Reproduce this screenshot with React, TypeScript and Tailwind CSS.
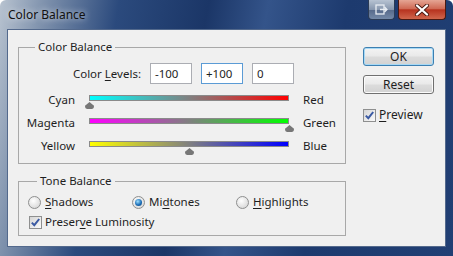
import React from "react";

const sliders = [
  { left: "Cyan", right: "Red", value: -100, grad: "bg-[linear-gradient(to_right,#00ffff,#808080,#ff0000)]" },
  { left: "Magenta", right: "Green", value: 100, grad: "bg-[linear-gradient(to_right,#ff00ff,#808080,#00ff00)]" },
  { left: "Yellow", right: "Blue", value: 0, grad: "bg-[linear-gradient(to_right,#ffff00,#808080,#0000ff)]" },
];

function U({ children }: { children: React.ReactNode }) {
  return <span className="underline underline-offset-[2px] decoration-[1px]">{children}</span>;
}

function Check() {
  return (
    <span className="w-[13px] h-[13px] shrink-0 border border-[#8e8f8f] bg-[linear-gradient(135deg,#d5d5d5,#fbfbfb)] flex items-center justify-center">
      <svg width="11" height="11" viewBox="0 0 11 11">
        <path d="M1.8 5.6 L4.3 8.2 L9.2 2" stroke="#3b5aa3" strokeWidth="2" fill="none" />
      </svg>
    </span>
  );
}

function Radio({ on }: { on?: boolean }) {
  return (
    <span className="w-[13px] h-[13px] shrink-0 rounded-full border border-[#8e8f8f] bg-[radial-gradient(circle_at_40%_35%,#ffffff,#cfcfcf)] flex items-center justify-center">
      {on && (
        <span className="w-[7px] h-[7px] rounded-full bg-[radial-gradient(circle_at_40%_35%,#9fe0ff,#1d6fb8_55%,#0d3f75)]" />
      )}
    </span>
  );
}

function Thumb({ value }: { value: number }) {
  const center = ((value + 100) / 200) * 200;
  return (
    <svg
      className="absolute top-[7px]"
      style={{ left: center - 4.5 }}
      width="9"
      height="7"
      viewBox="0 0 9 7"
    >
      <path d="M4.5 0 L9 3.8 Q9 7 6.5 7 H2.5 Q0 7 0 3.8 Z" fill="#777777" />
    </svg>
  );
}

export default function App() {
  return (
    <div className="w-[453px] h-[256px] flex flex-col rounded-t-[6px] overflow-hidden text-[11.5px] text-[#1e1e1e] font-['Noto_Sans',sans-serif] bg-[linear-gradient(100deg,#b8c3d0_0%,#7f92ad_9%,#2b4a7d_24%,#1b3667_42%,#34548a_54%,#1d3a6e_70%,#213f74_100%)]">
      {/* title bar */}
      <div className="h-[29px] flex items-start shrink-0">
        <div className="pl-[8px] pt-[7px] leading-[16px] text-[12px] text-[#111] [text-shadow:0_0_6px_rgba(255,255,255,0.9)]">
          Color Balance
        </div>
        <div className="ml-auto flex gap-[3px] mr-[7px]">
          <div className="w-[27px] h-[20px] rounded-b-[4px] border border-t-0 border-[#2b3b55] bg-[linear-gradient(to_bottom,#b7c3d2,#8797ae_50%,#56698a_52%,#7489a8)] flex items-center justify-center">
            <svg width="13" height="11" viewBox="0 0 13 11">
              <rect x="1" y="1" width="8" height="9" fill="none" stroke="#e8edf3" strokeWidth="1.3" />
              <path d="M5 5.5 H12 M9.5 3 L12 5.5 L9.5 8" stroke="#e8edf3" strokeWidth="1.3" fill="none" />
            </svg>
          </div>
          <div className="w-[48px] h-[20px] rounded-b-[4px] border border-t-0 border-[#4b1a12] bg-[linear-gradient(to_bottom,#e5a594,#cf6a55_45%,#b7331f_52%,#d0664c)] flex items-center justify-center">
            <svg width="16" height="12" viewBox="0 0 16 12">
              <path d="M3 1.5 L13 10.5 M13 1.5 L3 10.5" stroke="#4a1a12" strokeWidth="4" strokeLinecap="round" />
              <path d="M3 1.5 L13 10.5 M13 1.5 L3 10.5" stroke="#ffffff" strokeWidth="2.3" strokeLinecap="round" />
            </svg>
          </div>
        </div>
      </div>

      {/* client */}
      <div className="mx-[7px] h-[218px] shrink-0 border border-[#53698c] bg-[#f0f0f0] flex">
        <div className="pl-[10px] flex flex-col">
          <fieldset className="mt-[9px] w-[328px] border border-[#a8a8a8] pb-[5px]">
            <legend className="ml-[16px] px-[3px] leading-[16px]">Color Balance</legend>
            <div className="flex items-center mt-[8px]">
              <div className="w-[122px] text-right">
                Color <U>L</U>evels:
              </div>
              <div className="ml-[9px] flex gap-[9px]">
                <div className="w-[42px] h-[21px] border border-[#abadb3] bg-white pl-[4px] leading-[19px]">-100</div>
                <div className="w-[42px] h-[21px] border border-[#5b9bd5] bg-white pl-[4px] leading-[19px]">+100</div>
                <div className="w-[42px] h-[21px] border border-[#abadb3] bg-white pl-[4px] leading-[19px]">0</div>
              </div>
            </div>
            <div className="mt-[5px] flex flex-col">
              {sliders.map((s) => (
                <div key={s.left} className="h-[23px] flex items-start">
                  <div className="w-[56px] text-right mt-[3px] leading-[16px]">{s.left}</div>
                  <div className="relative ml-[14px] w-[200px] mt-[6px]">
                    <div className={`h-[6px] border border-[#8a8a8a] ${s.grad}`} />
                    <Thumb value={s.value} />
                  </div>
                  <div className="ml-[14px] mt-[3px] leading-[16px]">{s.right}</div>
                </div>
              ))}
            </div>
          </fieldset>

          <fieldset className="mt-[9px] w-[328px] border border-[#a8a8a8] pb-[5px]">
            <legend className="ml-[18px] px-[3px] leading-[16px]">Tone Balance</legend>
            <div className="mt-[5px] pl-[9px] flex h-[16px] items-center">
              <div className="w-[104px] flex items-center gap-[4px]">
                <Radio />
                <span><U>S</U>hadows</span>
              </div>
              <div className="w-[104px] flex items-center gap-[4px]">
                <Radio on />
                <span>Mi<U>d</U>tones</span>
              </div>
              <div className="flex items-center gap-[4px]">
                <Radio />
                <span><U>H</U>ighlights</span>
              </div>
            </div>
            <div className="mt-[4px] pl-[10px] flex h-[16px] items-center gap-[3px]">
              <Check />
              <span>Preser<U>v</U>e Luminosity</span>
            </div>
          </fieldset>
        </div>

        <div className="ml-[17px] pt-[17px] flex flex-col">
          <div className="w-[71px] h-[19px] rounded-[3px] border border-[#3c7fb1] bg-[linear-gradient(to_bottom,#f4f4f4,#e9e9e9_48%,#dcdcdc_52%,#d2d2d2)] flex items-center justify-center leading-[16px] text-[12px] shadow-[inset_0_0_0_1px_#a7d9f5]">
            OK
          </div>
          <div className="mt-[9px] w-[71px] h-[19px] rounded-[3px] border border-[#707070] bg-[linear-gradient(to_bottom,#f4f4f4,#e9e9e9_48%,#dcdcdc_52%,#d2d2d2)] flex items-center justify-center leading-[16px] text-[12px] shadow-[inset_0_0_0_1px_#fbfbfb]">
            Reset
          </div>
          <div className="mt-[13px] h-[16px] flex items-center gap-[3px]">
            <Check />
            <span className="text-[12px]"><U>P</U>review</span>
          </div>
        </div>
      </div>
    </div>
  );
}
